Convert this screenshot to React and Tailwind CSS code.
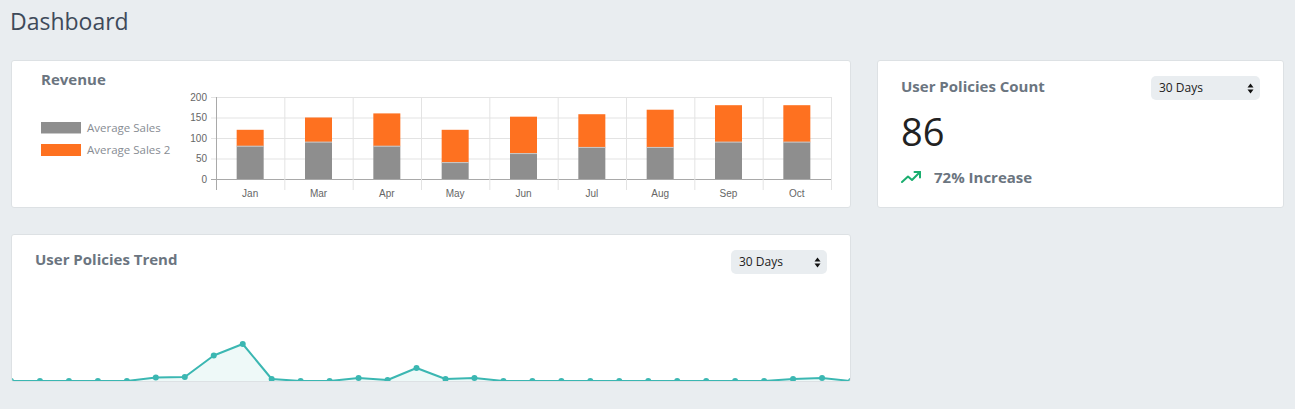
import React from 'react'

const months = [
  { m: 'Jan', a: 80, b: 120 },
  { m: 'Mar', a: 90, b: 150 },
  { m: 'Apr', a: 80, b: 160 },
  { m: 'May', a: 40, b: 120 },
  { m: 'Jun', a: 62, b: 152 },
  { m: 'Jul', a: 77, b: 158 },
  { m: 'Aug', a: 77, b: 169 },
  { m: 'Sep', a: 90, b: 180 },
  { m: 'Oct', a: 90, b: 180 },
]

const trend = [0, 0, 0, 0, 0, 3.5, 4, 25.5, 37, 2, 0, 0, 3, 1, 13, 2, 3, 0, 0, 0, 0, 0, 0, 0, 0, 0, 0, 2, 3, 0]

const font = { fontFamily: '"Open Sans", "Noto Sans", sans-serif' }
const chartFont = '"Liberation Sans", Arial, sans-serif'

function SelectBox({ className }) {
  return (
    <div className={`flex items-center justify-between bg-[#e9edf0] rounded-[5px] h-[24px] pl-[8px] pr-[6px] text-[12px] text-[#222] ${className}`}>
      <span>30 Days</span>
      <svg width="7" height="11" viewBox="0 0 7 11">
        <path d="M3.5 0.5 L6.5 4.5 L0.5 4.5 Z" fill="#111" />
        <path d="M3.5 10.5 L6.5 6.5 L0.5 6.5 Z" fill="#111" />
      </svg>
    </div>
  )
}

function BarChart() {
  const left = 35
  const right = 650
  const base = 89
  const k = 0.41
  const step = (right - left) / months.length
  const ticks = [0, 50, 100, 150, 200]
  return (
    <svg width="660" height="112" className="block" style={{ fontFamily: chartFont }}>
      {ticks.map(t => (
        <g key={t}>
          <line x1={left - 5} x2={right} y1={base - t * k + 0.5} y2={base - t * k + 0.5} stroke={t === 0 ? '#a9a9a9' : '#e3e3e3'} />
          <text x={left - 9} y={base - t * k + 3.5} fontSize="10" textAnchor="end" fill="#666">{t}</text>
        </g>
      ))}
      {Array.from({ length: months.length + 1 }).map((_, i) => (
        <line key={i} x1={left + i * step + 0.5} x2={left + i * step + 0.5} y1={7} y2={base + 11} stroke={i === 0 ? '#a9a9a9' : '#e3e3e3'} />
      ))}
      {months.map((d, i) => {
        const cx = left + i * step + step / 2
        const w = 27
        return (
          <g key={d.m}>
            <rect x={cx - w / 2} y={base - d.b * k} width={w} height={(d.b - d.a) * k} fill="#fe7120" />
            <rect x={cx - w / 2} y={base - d.a * k} width={w} height={d.a * k} fill="#8e8e8e" />
            <line x1={cx - w / 2} x2={cx + w / 2} y1={base - d.a * k} y2={base - d.a * k} stroke="#c8c8c8" strokeWidth="1" />
            <text x={cx} y={107} fontSize="10" textAnchor="middle" fill="#666">{d.m}</text>
          </g>
        )
      })}
    </svg>
  )
}

function TrendChart() {
  const w = 838
  const h = 108
  const base = 107
  const step = 840 / 29
  const pts = trend.map((v, i) => [-1 + i * step, base - v])
  const line = pts.map(p => p.join(',')).join(' ')
  const area = `M${pts[0][0]},${base} L${line.split(' ').join(' L')} L${pts[pts.length - 1][0]},${base} Z`
  return (
    <svg width={w} height={h} className="block">
      <path d={area} fill="#eef9f8" />
      <polyline points={line} fill="none" stroke="#3bb7b2" strokeWidth="2" strokeLinejoin="round" />
      {pts.map((p, i) => (
        <circle key={i} cx={p[0]} cy={p[1]} r="3" fill="#3bb7b2" />
      ))}
    </svg>
  )
}

export default function App() {
  return (
    <div className="min-h-screen bg-[#e9edf0] px-[11px] pt-[4px]" style={font}>
      <h1 className="text-[23px] leading-[34px] h-[34px] text-[#3e4a5a] ml-[-1px]">Dashboard</h1>

      <div className="flex gap-[26px] mt-[22px]">
        <div className="w-[840px] flex flex-col gap-[26px]">
          {/* Revenue */}
          <div className="h-[148px] bg-white border border-[#dde1e4] rounded-[3px] flex overflow-hidden">
            <div className="w-[169px] pl-[29px] pt-[8px]">
              <div className="text-[15px] font-bold text-[#6b7580] leading-[20px]">Revenue</div>
              <div className="mt-[33px] flex flex-col gap-[10px] text-[11.5px] text-[#878c93]">
                <div className="flex items-center gap-[6px] h-[12px]">
                  <span className="w-[40px] h-[12px] bg-[#8e8e8e] border-b border-[#c8c8c8]" />
                  <span className="leading-[12px]">Average Sales</span>
                </div>
                <div className="flex items-center gap-[6px] h-[12px]">
                  <span className="w-[40px] h-[12px] bg-[#fe7120]" />
                  <span className="leading-[12px]">Average Sales 2</span>
                </div>
              </div>
            </div>
            <div className="pt-[29px]">
              <BarChart />
            </div>
          </div>

          {/* Trend */}
          <div className="h-[148px] bg-white border border-[#dde1e4] rounded-[3px] flex flex-col overflow-hidden">
            <div className="flex justify-between items-start pl-[23px] pr-[23px] pt-[15px]">
              <div className="text-[15px] font-bold text-[#6b7580] leading-[20px] mt-[-1px]">User Policies Trend</div>
              <SelectBox className="w-[96px]" />
            </div>
            <div className="mt-auto">
              <TrendChart />
            </div>
          </div>
        </div>

        {/* Count */}
        <div className="w-[407px] h-[148px] bg-white border border-[#dde1e4] rounded-[3px] pl-[23px] pr-[23px] pt-[15px]">
          <div className="flex justify-between items-start">
            <div className="text-[15px] font-bold text-[#6b7580] leading-[20px]">User Policies Count</div>
            <SelectBox className="w-[109px]" />
          </div>
          <div className="text-[38px] leading-[44px] text-[#222] mt-[9px]">86</div>
          <div className="flex items-center gap-[12px] mt-[13px]">
            <svg width="21" height="14" viewBox="0 0 21 14" fill="none" stroke="#1aae6f" strokeWidth="2" strokeLinecap="round" strokeLinejoin="round">
              <path d="M1 12 L7 6.5 L11 10 L19 2" />
              <path d="M13.5 2 L19 2 L19 7.5" />
            </svg>
            <span className="text-[15px] font-bold text-[#6b7580]">72% Increase</span>
          </div>
        </div>
      </div>
    </div>
  )
}
